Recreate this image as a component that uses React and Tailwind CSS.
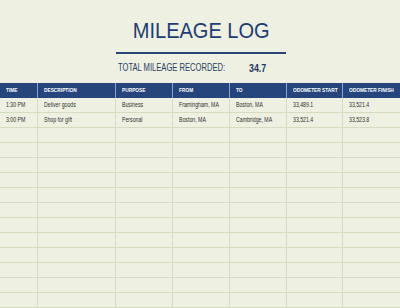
import React from 'react';

const font = { fontFamily: '"Liberation Sans", Arial, sans-serif' };

const columns = ['Time', 'Description', 'Purpose', 'From', 'To', 'Odometer Start', 'Odometer Finish'];

const entries = [
  ['1:30 PM', 'Deliver goods', 'Business', 'Framingham, MA', 'Boston, MA', '33,489.1', '33,521.4'],
  ['3:00 PM', 'Shop for gift', 'Personal', 'Boston, MA', 'Cambridge, MA', '33,521.4', '33,523.8'],
];

const EMPTY_ROWS = 12;

const App = () => {
  const rows = [...entries, ...Array.from({ length: EMPTY_ROWS }, () => Array(7).fill(''))];

  return (
    <div className="w-[400px] h-[308px] overflow-hidden bg-[#eef1e2]" style={font}>
      <div className="pt-[18px] flex flex-col items-center">
        <h1 className="ml-[2px] text-[22px] leading-[26px] text-[#1f3c73] scale-x-[0.91]">MILEAGE LOG</h1>
        <div className="mt-[8px] ml-[2px] w-[170px] h-[2px] bg-[#2a4577]" />
        <div className="mt-[8px] ml-[2px] w-[170px] flex items-center leading-[12px] whitespace-nowrap">
          <span className="ml-[2px] w-[131px] text-[10px] text-[#2c3e66] origin-left scale-x-[0.76]">
            TOTAL MILEAGE RECORDED:
          </span>
          <span className="text-[11px] font-bold text-[#24365e] origin-left scale-x-[0.8]">34.7</span>
        </div>
      </div>

      <div className="mt-[9px] grid grid-cols-[37px_78px_57px_57px_57px_56px_58px]">
        {columns.map((col, i) => (
          <div
            key={col}
            className={`h-[15px] flex items-center pl-[6px] bg-[#26457c] whitespace-nowrap ${
              i > 0 ? 'border-l border-[#8ea3c9]' : ''
            }`}
          >
            <span className="text-white text-[6px] font-bold uppercase origin-left scale-x-[0.8]">{col}</span>
          </div>
        ))}
        {rows.map((row, r) =>
          row.map((cell, c) => (
            <div
              key={`${r}-${c}`}
              className={`h-[15px] flex items-center pl-[6px] border-b border-[#d6dcc0] whitespace-nowrap ${
                c > 0 ? 'border-l border-l-[#d6dcc0]' : ''
              }`}
            >
              <span className="text-[6.5px] text-[#2f2f2f] origin-left scale-x-[0.8]">{cell}</span>
            </div>
          ))
        )}
      </div>
    </div>
  );
};

export default App;
